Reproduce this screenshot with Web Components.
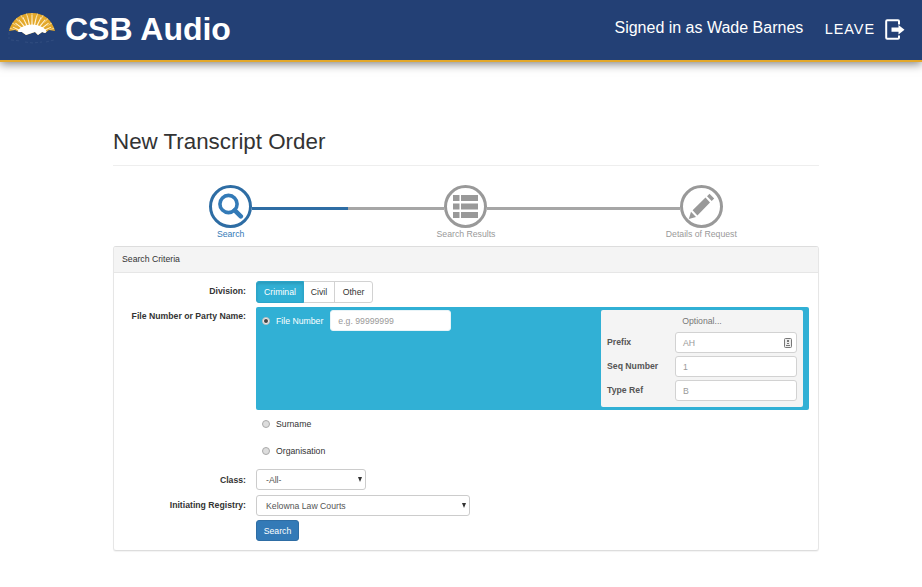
<!DOCTYPE html>
<html lang="en">
<head>
<meta charset="utf-8">
<title>CSB Audio</title>
<style>
html, body { margin: 0; height: 100%; background: #fff; overflow: hidden; }
body { font: 8.7px/12px "Liberation Sans", Arial, sans-serif; color: #333; }
</style>
</head>
<body>
<csb-app></csb-app>
<script>
const define = (name, html) => {
  const t = document.createElement('template');
  t.innerHTML = '<style>*{box-sizing:border-box}:host{box-sizing:border-box}</style>' + html;
  customElements.define(name, class extends HTMLElement {
    constructor() {
      super();
      this.attachShadow({ mode: 'open' }).append(t.content.cloneNode(true));
    }
  });
};

/* Sunburst over snowy peaks: pale and gold rays fanned around the lower centre */
const fan = (n, r0, r1, w0, w1, shift) => Array.from({ length: n }, (_, i) => {
  const a = Math.PI * (0.03 + (i + shift) * 0.94 / n);
  const p = (r, q) => (24 + r * Math.cos(q)).toFixed(1) + ' ' + (24 - r * Math.sin(q)).toFixed(1);
  return `M${p(r0, a - w0)}L${p(r1, a - w1)}L${p(r1, a + w1)}L${p(r0, a + w0)}Z`;
}).join('');

define('csb-logo', `<style>:host{display:block;width:48px;height:32px}svg{display:block}</style>
<svg width="48" height="32" viewBox="0 0 48 32">
<defs><clipPath id="dome"><path d="M1 19C4 7 13 1 24 1S44 7 47 19L41 18 37 21 34 20 30 23 27 20 24 21 18 23 14 20 11 20 7 18Z"/></clipPath></defs>
<g clip-path="url(#dome)"><rect width="48" height="24" fill="#e3a82b"/>
<path d="${fan(13, 8, 21, .1, .02, .5)}" fill="#fff3d6"/>
<path d="${fan(12, 18, 30, .012, .035, 1)}" fill="#f3d48c"/>
<ellipse cx="24" cy="22" rx="15" ry="9.5" fill="#fff"/></g>
<path d="M1 20V27M3 28L13 29M17 30L25 31 34 30M38 30L46 28" stroke="#3b5687" stroke-width=".6" stroke-dasharray="3 2" fill="none"/>
</svg>`);

define('csb-header', `<style>
:host{display:flex;align-items:center;height:62px;padding:0 17px 4px 8px;background:#234075;border-bottom:2px solid #e3a82b;box-shadow:0 2px 9px rgba(0,0,0,.5);color:#fff}
h1{margin:1px 0 0 9px;font-size:32px;line-height:40px;font-weight:bold;flex:1;white-space:nowrap}
.user{font-size:16px;line-height:20px;margin-right:21.5px;white-space:nowrap}
.leave{font-size:14.5px;line-height:20px;letter-spacing:.9px;margin:1px 10px 0 0}
svg{margin-top:3px}
</style>
<csb-logo></csb-logo><h1>CSB Audio</h1><span class="user">Signed in as Wade Barnes</span><span class="leave">LEAVE</span>
<svg width="20" height="22" viewBox="0 0 20 22"><path d="M14 5.5V2.2Q14 1.2 13 1.2H2.2Q1.2 1.2 1.2 2.2V18.8Q1.2 19.8 2.2 19.8H13Q14 19.8 14 18.8V16.5" fill="none" stroke="#fff" stroke-width="2"/><path d="M6.5 8.5H13.5V6L19.5 10.7 13.5 15.4V12.7H6.5Z" fill="#fff"/></svg>`);

define('csb-step', `<style>
:host{display:grid;grid-template-columns:1fr 43px 1fr;align-items:center;color:#999;--ring:#999;--left:#a6a6a6;--right:#a6a6a6}
:host([active]){color:#337ab7;--ring:#2e6da4;--right:#2e6da4}
:host([first]){--left:transparent}:host([last]){--right:transparent}
i{height:3px;margin-top:4px}
.l{background:var(--left)}.r{background:var(--right)}
.c{width:43px;height:43px;border:3px solid var(--ring);border-radius:50%;display:flex;align-items:center;justify-content:center}
.t{grid-column:1/4;text-align:center;line-height:12px}
</style><i class="l"></i><div class="c"><slot name="icon"></slot></div><i class="r"></i><div class="t"><slot></slot></div>`);

define('csb-steps', `<style>:host{display:grid;grid-template-columns:repeat(3,1fr);margin-top:19px}svg{display:block}</style>
<csb-step active first><svg slot="icon" width="27" height="27" viewBox="0 0 27 27" fill="none" stroke="currentColor"><circle cx="11.5" cy="11" r="8.6" stroke-width="3.6"/><path d="M17.8 17.3L23.8 23.3" stroke-width="4.6" stroke-linecap="round"/></svg>Search</csb-step>
<csb-step><svg slot="icon" width="25" height="23" viewBox="0 0 25 23" fill="currentColor"><path d="M0 0H6.5V6H0ZM8 0H25V6H8ZM0 8.5H6.5V14.5H0ZM8 8.5H25V14.5H8ZM0 17H6.5V23H0ZM8 17H25V23H8Z"/></svg>Search Results</csb-step>
<csb-step last><svg slot="icon" width="27" height="27" viewBox="0 0 27 27" fill="currentColor"><path d="M.8 26L3 18.7 8 24ZM4.6 17.2L17.5 4.6 22 9.4 9.4 22.4ZM19 3.2L21.5 .8 26.2 5.5 23.7 8Z"/></svg>Details of Request</csb-step>`);

define('csb-field', `<style>
:host{display:grid;grid-template-columns:132px 1fr;column-gap:10px}
.l{text-align:right;font-weight:bold;line-height:12px;padding-top:var(--label-top,4px)}
</style><div class="l"><slot name="label"></slot></div><div><slot></slot></div>`);

define('csb-input', `<style>
:host{display:flex;align-items:center;justify-content:space-between;height:21px;padding:0 4px 0 7px;border:1px solid #d2d2d2;border-radius:3px;background:#fff;color:#999}
</style><span><slot></slot></span><slot name="end"></slot>`);

define('csb-select', `<style>
:host{display:flex;align-items:center;justify-content:space-between;height:21px;padding:0 3px 0 9px;border:1px solid #ccc;border-radius:3px;background:#fff;color:#555}
</style><span><slot></slot></span><svg width="4" height="5" viewBox="0 0 4 5"><path d="M0 0H4L2 5Z" fill="#333"/></svg>`);

define('csb-segments', `<style>
:host{display:inline-flex;width:117px;height:22px;border:1px solid #d2d2d2;border-radius:3px;line-height:20px;vertical-align:top}
span{flex:1;text-align:center}span+span{border-left:1px solid #d2d2d2}
.on{flex:none;width:48px;line-height:20px;background:#31b0d5;color:#fff;margin:-1px 0 -1px -1px;border:1px solid #2ba5ca;border-radius:3px 0 0 3px;box-shadow:inset 0 2px 3px rgba(0,0,0,.125)}
.on+span{border-left:0;flex:none;width:30px}
</style><span class="on">Criminal</span><span>Civil</span><span>Other</span>`);

define('csb-radio', `<style>
:host{display:flex;align-items:center;gap:6px}
i{width:8px;height:8px;border:1px solid #aaa;border-radius:50%;background:#ddd;display:flex;align-items:center;justify-content:center}
:host([checked]) i{background:#eee;border-color:#bbb}
:host([checked]) i::after{content:"";width:4px;height:4px;border-radius:50%;background:#444}
</style><i></i><slot></slot>`);

define('csb-optional', `<style>
:host{display:grid;grid-template-columns:68px 1fr;row-gap:3px;align-items:center;width:202px;height:97px;padding:5px 6px;background:#f4f4f4;border-radius:2px;color:#555;align-content:start}
.h{grid-column:1/3;text-align:center;color:#777;line-height:12px;margin-bottom:2px}
b{color:#555;line-height:12px;margin-top:-1px}
</style><div class="h">Optional...</div>
<b>Prefix</b><csb-input>AH<svg slot="end" width="8" height="10" viewBox="0 0 8 10"><rect x=".5" y=".5" width="7" height="9" rx="1" fill="#eee" stroke="#777"/><path d="M3 2H5V4H3ZM3 5H5V6H3ZM2 7H6V8H2Z" fill="#777"/></svg></csb-input>
<b>Seq Number</b><csb-input>1</csb-input><b>Type Ref</b><csb-input>B</csb-input>`);

define('csb-panel', `<style>
:host{display:block;border:1px solid #ddd;border-color:#ddd #e6e6e6 #ddd;border-radius:3px;height:305px;margin-top:6px;box-shadow:0 1px 1px rgba(0,0,0,.05)}
.h{height:26px;padding:0 8px;line-height:25px;background:#f4f4f4;border-bottom:1px solid #e6e6e6;border-radius:2px 2px 0 0}
.b{padding:8px 9px 0 0;display:grid}
.blue{display:flex;justify-content:space-between;height:103px;background:#31b0d5;border-radius:2px;padding:3px 6px 3px 6px;color:#fff}
.file{display:flex;gap:7px;height:21px}
.file csb-input{width:121px;border-color:#e8f4f8}
.sur{margin:8px 0 0 6px;height:12px}.org{margin:15px 0 0 6px;height:12px}
.go{display:block;width:43px;text-align:center;height:21px;line-height:20px;border:1px solid #2e6da4;background:#337ab7;color:#fff;border-radius:3px}
</style>
<div class="h">Search Criteria</div>
<div class="b">
<csb-field style="height:26px"><span slot="label">Division:</span><csb-segments></csb-segments></csb-field>
<csb-field style="height:162px;--label-top:3px"><span slot="label">File Number or Party Name:</span>
<div class="blue"><div class="file"><csb-radio checked>File Number</csb-radio><csb-input>e.g. 99999999</csb-input></div><csb-optional></csb-optional></div>
<csb-radio class="sur">Surname</csb-radio><csb-radio class="org">Organisation</csb-radio></csb-field>
<csb-field style="height:26px;--label-top:5px"><span slot="label">Class:</span><csb-select style="width:110px">-All-</csb-select></csb-field>
<csb-field style="height:25px;--label-top:4px"><span slot="label">Initiating Registry:</span><csb-select style="width:214px">Kelowna Law Courts</csb-select></csb-field>
<csb-field><span class="go">Search</span></csb-field>
</div>`);

define('csb-app', `<style>
:host{display:block}
main{width:706px;margin:0 0 0 113px;padding-top:64px}
h2{margin:0;height:40px;padding-top:1px;font-size:22.35px;line-height:30px;font-weight:normal;border-bottom:1px solid #eee}
</style><csb-header></csb-header><main><h2>New Transcript Order</h2><csb-steps></csb-steps><csb-panel></csb-panel></main>`);
</script>
</body>
</html>
